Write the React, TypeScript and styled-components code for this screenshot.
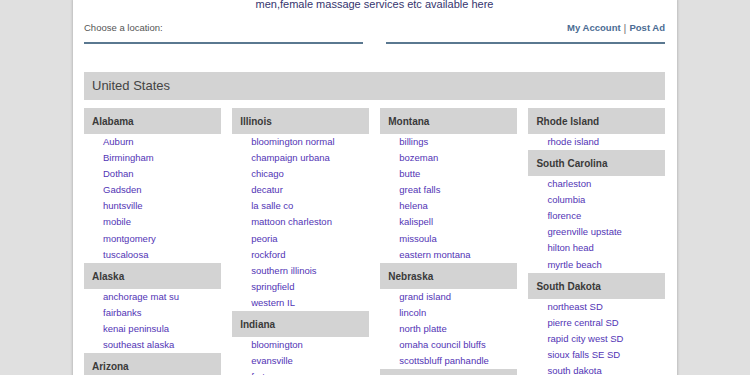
import React from "react";
import styled, { createGlobalStyle } from "styled-components";

const Global = createGlobalStyle`
  html, body { margin: 0; padding: 0; background: #e0e0e0; }
  body { font-family: "Liberation Sans", Arial, sans-serif; }
  * { box-sizing: border-box; }
`;

const Page = styled.div`
  width: 604px;
  margin: 0 auto;
  min-height: 375px;
  background: #ffffff;
  box-shadow: 0 0 3px rgba(0, 0, 0, 0.28);
  padding: 0 12px 20px 11px;
`;

const Title = styled.div`
  margin-top: -2px;
  text-align: center;
  font-size: 11px;
  line-height: 12px;
  color: #35356e;
`;

const TopBar = styled.div`
  display: grid;
  grid-template-columns: 1fr 1fr;
  column-gap: 23px;
  margin-top: 12px;
`;

const TopCell = styled.div<{ $right?: boolean }>`
  display: flex;
  justify-content: ${(p) => (p.$right ? "flex-end" : "flex-start")};
  align-items: center;
  font-size: 9.5px;
  line-height: 12px;
  padding-bottom: 8px;
  border-bottom: 2px solid #5a7890;
  color: #555;
`;

const AccountLink = styled.a`
  font-weight: bold;
  color: #4b6c93;
  text-decoration: none;
`;

const Sep = styled.span`
  color: #777;
  margin: 0 3px;
  font-size: 11px;
`;

const Country = styled.div`
  margin-top: 28px;
  height: 28px;
  line-height: 28px;
  background: #d3d3d3;
  padding: 0 8px;
  font-size: 13px;
  color: #444;
`;

const Columns = styled.div`
  display: grid;
  grid-template-columns: repeat(4, 1fr);
  column-gap: 11.5px;
  margin-top: 8px;
  align-items: start;
`;

const Column = styled.div`
  display: flex;
  flex-direction: column;
`;

const StateHead = styled.div`
  height: 26px;
  line-height: 27px;
  background: #d3d3d3;
  padding: 0 8px;
  font-size: 10px;
  font-weight: bold;
  color: #3a3a3a;
`;

const CityList = styled.ul`
  list-style: none;
  margin: 0;
  padding: 0 0 0 19px;
`;

const City = styled.li`
  font-size: 9.5px;
  line-height: 16.1px;
  height: 16.1px;
  white-space: nowrap;
`;

const CityLink = styled.a`
  color: #5234b5;
  text-decoration: none;
`;

type State = { name: string; cities: string[] };

const columns: State[][] = [
  [
    { name: "Alabama", cities: ["Auburn", "Birmingham", "Dothan", "Gadsden", "huntsville", "mobile", "montgomery", "tuscaloosa"] },
    { name: "Alaska", cities: ["anchorage mat su", "fairbanks", "kenai peninsula", "southeast alaska"] },
    { name: "Arizona", cities: ["flagstaff sedona", "mohave county", "phoenix"] },
  ],
  [
    { name: "Illinois", cities: ["bloomington normal", "champaign urbana", "chicago", "decatur", "la salle co", "mattoon charleston", "peoria", "rockford", "southern illinois", "springfield", "western IL"] },
    { name: "Indiana", cities: ["bloomington", "evansville", "fort wayne", "indianapolis"] },
  ],
  [
    { name: "Montana", cities: ["billings", "bozeman", "butte", "great falls", "helena", "kalispell", "missoula", "eastern montana"] },
    { name: "Nebraska", cities: ["grand island", "lincoln", "north platte", "omaha council bluffs", "scottsbluff panhandle"] },
    { name: "Nevada", cities: ["elko", "las vegas", "reno tahoe"] },
  ],
  [
    { name: "Rhode Island", cities: ["rhode island"] },
    { name: "South Carolina", cities: ["charleston", "columbia", "florence", "greenville upstate", "hilton head", "myrtle beach"] },
    { name: "South Dakota", cities: ["northeast SD", "pierre central SD", "rapid city west SD", "sioux falls SE SD", "south dakota"] },
    { name: "Tennessee", cities: ["chattanooga", "clarksville"] },
  ],
];

export default function App() {
  return (
    <>
      <Global />
      <Page>
        <Title>men,female massage services etc available here</Title>
        <TopBar>
          <TopCell>Choose a location:</TopCell>
          <TopCell $right>
            <AccountLink href="#">My Account</AccountLink>
            <Sep>|</Sep>
            <AccountLink href="#">Post Ad</AccountLink>
          </TopCell>
        </TopBar>
        <Country>United States</Country>
        <Columns>
          {columns.map((col, i) => (
            <Column key={i}>
              {col.map((st) => (
                <React.Fragment key={st.name}>
                  <StateHead>{st.name}</StateHead>
                  <CityList>
                    {st.cities.map((c) => (
                      <City key={c}>
                        <CityLink href="#">{c}</CityLink>
                      </City>
                    ))}
                  </CityList>
                </React.Fragment>
              ))}
            </Column>
          ))}
        </Columns>
      </Page>
    </>
  );
}
